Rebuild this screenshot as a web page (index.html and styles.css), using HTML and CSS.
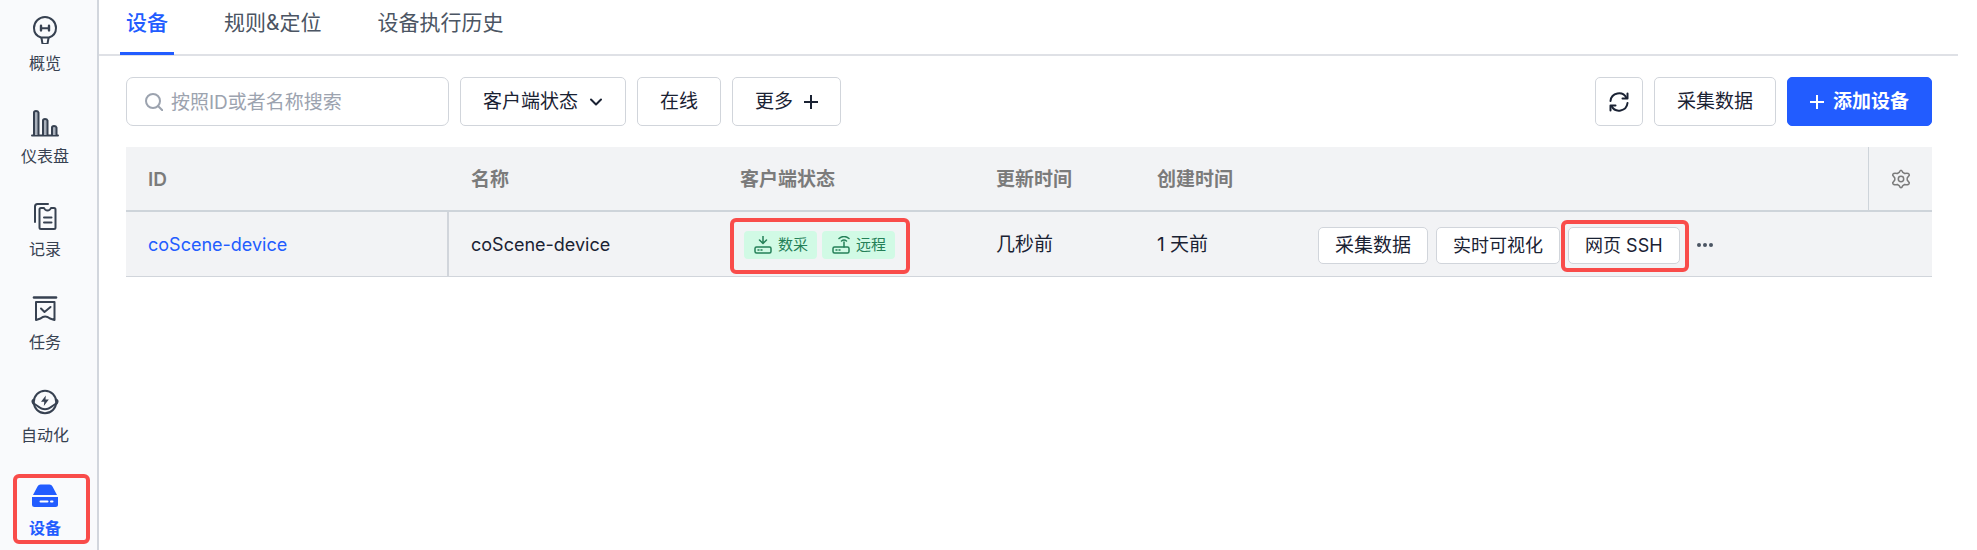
FILE: index.html
```html
<!DOCTYPE html>
<html lang="zh-CN">
<head>
<meta charset="utf-8">
<title>设备</title>
<link rel="stylesheet" href="styles.css">
</head>
<body>
<div class="app">
  <nav class="sidebar">
    <a class="nav-item" href="#">
      <svg class="nav-icon" viewBox="0 0 28 28"><path d="M10 21.500C5.500 20 3 16.500 3 12a11 11 0 0 1 22 0c0 4.500-2.500 8-7 9.500z"/><path d="M10.500 22l1 6h5l1-6"/><path d="M10 9.800v4.600M18 9.800v4.600" stroke-width="2.400"/><path d="M10 12.200h8"/></svg>
      <span>概览</span>
    </a>
    <a class="nav-item" href="#">
      <svg class="nav-icon" viewBox="0 0 28 28"><path d="M1 26.500h26"/><g class="nav-shade"><path d="M3 26V3.500Q3 2 5 2T7.500 3.500V26"/><path d="M12 26V11.500Q12 10 14 10t2.500 1.500V26"/><path d="M21 26v-7.500q0-1.500 2-1.500t2.500 1.500V26"/></g></svg>
      <span>仪表盘</span>
    </a>
    <a class="nav-item" href="#">
      <svg class="nav-icon" viewBox="0 0 28 28"><path d="M4 20V4.500Q4 2 6.500 2H17"/><path d="M10 6h3q1 2.500 3.500 2.500T20 6h3q1.500 0 1.500 1.500v18q0 1.500-1.500 1.500H10q-1.500 0-1.500-1.500v-18Q8.500 6 10 6zM13 15.500h7.500M13 20.500h7.500"/></svg>
      <span>记录</span>
    </a>
    <a class="nav-item" href="#">
      <svg class="nav-icon" viewBox="0 0 28 28"><path d="M3 2.500h22" stroke-width="2.600"/><path d="M5 7h18.500v18L19 23.500Q14 19.500 9.500 23.500L5 25zM10 13.500l3.500 3.500 6-5"/></svg>
      <span>任务</span>
    </a>
    <a class="nav-item" href="#">
      <svg class="nav-icon" viewBox="0 0 28 28"><circle cx="14" cy="14" r="11.200"/><path d="M3.500 16q5 3.500 7 4.500 3.500 1.500 7 0 2-1 7-4.500"/><path class="nav-solid" d="M3 10.500Q0 11.500.5 14T3 17.500zM25 10.500q3 1 2.500 3.500T25 17.500zM14.800 7.500L10 13.800h3.300L12.800 18l5-6.500h-3.300z"/></svg>
      <span>自动化</span>
    </a>
    <a class="nav-item nav-active" href="#" aria-current="page">
      <svg class="nav-icon" viewBox="0 0 28 28"><path class="nav-fill" d="M6.500 5.500Q7.500 3.500 9.500 3.500h9q2 0 3 2L26 14H2z"/><path class="nav-fill" d="M1 16h26v7.500q0 2.500-2.500 2.500h-21Q1 26 1 23.500z"/><path class="nav-hole" d="M9.500 20.500h7M20 20.500h1.500"/></svg>
      <span>设备</span>
    </a>
  </nav>
  <main class="main">
    <div class="tabs">
      <a class="tab tab-active" href="#">设备</a>
      <a class="tab" href="#">规则&amp;定位</a>
      <a class="tab" href="#">设备执行历史</a>
    </div>
    <div class="content">
      <div class="toolbar">
        <label class="search">
          <svg class="icon-search" viewBox="0 0 18 18"><circle cx="8" cy="8" r="7"/><path d="M13 13l4.300 4.300"/></svg>
          <input type="search" placeholder="按照ID或者名称搜索" aria-label="按照ID或者名称搜索">
        </label>
        <button class="btn" type="button">客户端状态<svg class="icon-chevron" viewBox="0 0 14 18"><path d="M2 6.500l5 5 5-5"/></svg></button>
        <button class="btn" type="button">在线</button>
        <button class="btn" type="button">更多<svg class="icon-plus" viewBox="0 0 14 14"><path d="M7 0v14M0 7h14"/></svg></button>
        <span class="spacer"></span>
        <button class="btn btn-icon" type="button" aria-label="刷新"><svg class="icon-refresh" viewBox="0 0 20 20"><path d="M1.500 9A8.500 8.500 0 0 1 17.500 6M18.500 11A8.500 8.500 0 0 1 2.500 14"/><path d="M18.500 1.500v5h-5M1.500 18.500v-5h5"/></svg></button>
        <button class="btn" type="button">采集数据</button>
        <button class="btn btn-primary" type="button"><svg class="icon-plus" viewBox="0 0 14 14"><path d="M7 0v14M0 7h14"/></svg>添加设备</button>
      </div>
      <table class="table">
        <colgroup><col class="col-id"><col class="col-name"><col class="col-status"><col class="col-time"><col class="col-time"><col><col class="col-gear"></colgroup>
        <thead>
          <tr>
            <th>ID</th><th>名称</th><th>客户端状态</th><th>更新时间</th><th>创建时间</th><th></th>
            <th class="gear-cell"><button class="plain" type="button" aria-label="表格设置"><svg class="icon-gear" viewBox="0 0 20 20"><path d="M8.200 3.400Q10-1 11.800 3.400l1.900 1.100Q18.500 3.500 18.300 6.200L16.200 9v2l2.100 2.800Q18.500 16.500 13.700 15.500l-1.900 1.100Q10 21 8.200 16.600l-1.900-1.100Q1.500 16.500 1.700 13.800L3.800 11V9L1.700 6.200Q1.500 3.500 6.300 4.500z"/><circle cx="10" cy="10" r="2.700"/></svg></button></th>
          </tr>
        </thead>
        <tbody>
          <tr>
            <td class="id-cell"><a class="link device" href="#">coScene-device</a></td>
            <td class="device">coScene-device</td>
            <td>
              <div class="tags">
                <span class="tag"><svg class="icon-tag" viewBox="0 0 18 18"><rect x="1" y="11" width="16" height="6" rx="1.500"/><path d="M9 0v7M5.500 4L9 7.500 12.500 4M4 14h1M7 14h1"/></svg>数采</span>
                <span class="tag"><svg class="icon-tag" viewBox="0 0 18 18"><rect x="1" y="11" width="16" height="6" rx="1.500"/><path d="M12 11V6M9.500 5q2.500-2 5 0M7 2.500q5-4 10 0M4 14h1M7 14h1"/></svg>远程</span>
              </div>
            </td>
            <td>几秒前</td>
            <td>1 天前</td>
            <td colspan="2">
              <div class="actions">
                <button class="btn-row btn-row-wide" type="button">采集数据</button>
                <button class="btn-row" type="button">实时可视化</button>
                <span class="marked"><button class="btn-row" type="button">网页 SSH</button></span>
                <button class="plain more" type="button" aria-label="更多操作"><svg class="icon-dots" viewBox="0 0 18 6"><circle cx="3" cy="3" r="2"/><circle cx="9" cy="3" r="2"/><circle cx="15" cy="3" r="2"/></svg></button>
              </div>
            </td>
          </tr>
        </tbody>
      </table>
    </div>
  </main>
</div>
</body>
</html>
```
FILE: styles.css
```css
* { box-sizing: border-box; }

body {
  margin: 0;
  background: #fff;
  color: #1a2233;
  font-family: Inter, "Noto Sans CJK SC", sans-serif;
  font-size: 19px;
  line-height: 28px;
}

a { color: inherit; text-decoration: none; }
button, input { font: inherit; color: inherit; }
svg { display: block; flex: none; fill: none; stroke: currentColor; stroke-linecap: round; stroke-linejoin: round; }

.app { display: flex; min-height: 100vh; }

.sidebar {
  display: flex;
  flex: none;
  flex-direction: column;
  gap: 35px;
  width: 99px;
  padding: 16px 7px 0 0;
  background: #f9fafc;
  border-right: 2px solid #d2d6dd;
}

.nav-item {
  position: relative;
  display: flex;
  flex-direction: column;
  align-items: center;
  gap: 8px;
  color: #374151;
  font-size: 16px;
  line-height: 22px;
}
.nav-icon { width: 28px; height: 28px; stroke-width: 2; }
.nav-shade { fill: #a9b0bb; }
.nav-solid { fill: currentColor; stroke: none; }
.nav-fill { fill: currentColor; stroke: none; }
.nav-hole { stroke: #fff; stroke-width: 2; }
.nav-active { color: #225cff; font-weight: 700; }

/* highlight frames */
.nav-active::after, .tags::after, .marked::after {
  content: "";
  position: absolute;
  border: 4px solid #f94c4a;
  border-radius: 6px;
  pointer-events: none;
}
.nav-active::after { inset: -7px 0 -5px 13px; }
.tags::after { inset: -13px -15px -15px -14px; }
.marked::after { inset: -7px -9px -8px -7px; }

.main { flex: 1; min-width: 0; margin-right: 19px; }

.tabs {
  display: flex;
  gap: 44px;
  padding-left: 21px;
  border-bottom: 2px solid #dfe1e6;
}
.tab {
  padding: 8px 6px 14px;
  margin-bottom: -1px;
  border-bottom: 3px solid transparent;
  color: #4b5563;
  font-size: 21px;
  line-height: 30px;
}
.tab-active { color: #225cff; border-color: #225cff; font-weight: 500; }

.content { padding: 21px 26px 0 27px; }

.toolbar { display: flex; gap: 11px; margin-bottom: 21px; }
.spacer { flex: 1; }

.search {
  display: flex;
  align-items: center;
  gap: 8px;
  width: 323px;
  height: 49px;
  padding: 0 18px;
  border: 1px solid #d1d5db;
  border-radius: 7px;
  color: #9ca3af;
}
.search input { flex: 1; min-width: 0; padding: 2px 0 0; border: 0; outline: 0; background: none; }
.search input::placeholder { color: #9ca3af; opacity: 1; }
.icon-search { width: 18px; height: 18px; stroke-width: 2; }

.btn {
  display: flex;
  align-items: center;
  justify-content: center;
  gap: 11px;
  height: 49px;
  padding: 1px 22px 0;
  border: 1px solid #d1d5db;
  border-radius: 5px;
  background: #fff;
}
.btn-icon { width: 48px; padding: 0; }
.btn-primary { border-color: #225cff; background: #225cff; color: #fff; font-weight: 600; }
.btn-primary { gap: 9px; }
.icon-chevron { width: 14px; height: 18px; stroke-width: 2; }
.icon-plus { width: 14px; height: 14px; stroke-width: 2; stroke-linecap: butt; }
.icon-refresh { width: 20px; height: 20px; stroke-width: 2; }

.table { width: 100%; table-layout: fixed; border-spacing: 0; background: #f2f3f5; }
.col-id { width: 323px; }
.col-name { width: 269px; }
.col-status { width: 256px; }
.col-time { width: 161px; }
.col-gear { width: 64px; }
.table th, .table td { height: 65px; padding: 2px 22px 0; text-align: left; vertical-align: middle; }
.table th { border-bottom: 2px solid #ced4da; color: #7b7b7b; font-weight: 600; }
.table td { border-bottom: 1px solid #d1d5db; }
.table .id-cell { border-right: 2px solid #d1d5db; }
.table .gear-cell { padding: 0; border-left: 1px solid #ced4da; }
.table .device { font-size: 18px; }
.link { color: #225cff; }

.plain { display: flex; align-items: center; justify-content: center; padding: 0; border: 0; background: none; }
.gear-cell .plain { width: 100%; }
.icon-gear { width: 20px; height: 20px; stroke-width: 1.500; }

.tags { position: relative; display: flex; gap: 5px; width: max-content; margin-left: 4px; }
.tag {
  display: flex;
  align-items: center;
  gap: 6px;
  height: 28px;
  padding: 0 9px 0 10px;
  border-radius: 4px;
  background: #d1fae5;
  color: #258058;
  font-size: 15px;
  line-height: 28px;
}
.icon-tag { width: 18px; height: 18px; stroke-width: 1.500; }

.actions { display: flex; align-items: center; gap: 8px; }
.marked { position: relative; }
.btn-row {
  display: block;
  height: 37px;
  padding: 1px 16px 0;
  border: 1px solid #d1d5db;
  border-radius: 5px;
  background: #fff;
  font-size: 18px;
  line-height: 28px;
  white-space: nowrap;
}
.btn-row-wide { font-size: 19px; }
.more { margin-left: 8px; color: #4b5563; }
.icon-dots { width: 18px; height: 6px; fill: currentColor; stroke: none; }
```
